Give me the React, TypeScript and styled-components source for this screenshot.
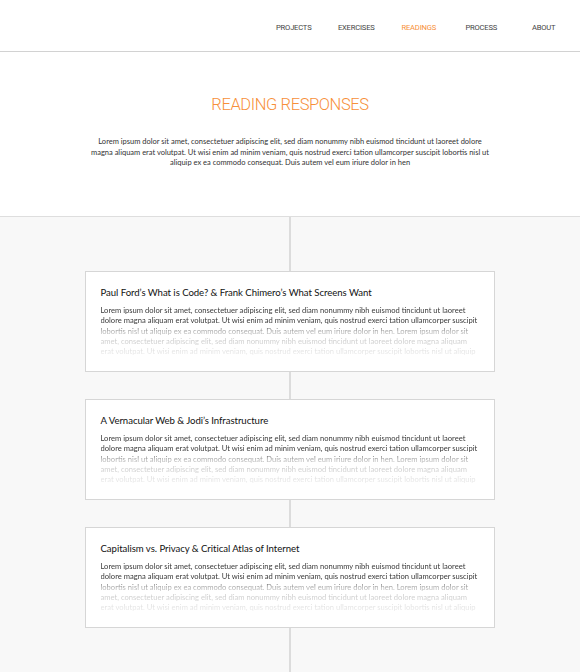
import React from "react";
import styled, { createGlobalStyle } from "styled-components";

const Global = createGlobalStyle`
  html, body { margin: 0; padding: 0; background: #ffffff; }
  body { font-family: "Lato", "Noto Sans", sans-serif; -webkit-font-smoothing: antialiased; }
  * { box-sizing: border-box; }
`;

const Page = styled.div`
  width: 580px;
  min-height: 672px;
  display: flex;
  flex-direction: column;
`;

const NavBar = styled.nav`
  height: 52px;
  border-bottom: 1px solid #d2d2d2;
  display: flex;
  justify-content: flex-end;
  align-items: center;
  padding-right: 5px;
  padding-top: 3px;
`;

const NavItem = styled.a<{ $active?: boolean }>`
  width: 62.5px;
  text-align: center;
  font-family: "Roboto", "Liberation Sans", sans-serif;
  font-size: 7.6px;
  letter-spacing: -0.2px;
  color: ${(p) => (p.$active ? "#f7903a" : "#444444")};
  text-decoration: none;
  text-transform: uppercase;
`;

const Intro = styled.header`
  height: 165px;
  border-bottom: 1px solid #dedede;
  display: flex;
  flex-direction: column;
  align-items: center;
  padding-top: 43px;
`;

const Title = styled.h1`
  margin: 0;
  font-family: "Roboto", "Liberation Sans", sans-serif;
  font-weight: 300;
  font-size: 16.5px;
  line-height: 20px;
  color: #f7903a;
  letter-spacing: -0.4px;
`;

const IntroText = styled.p`
  margin: 22px 0 0;
  width: 404px;
  text-align: center;
  font-size: 7.5px;
  line-height: 10.5px;
  color: #333333;
`;

const Timeline = styled.section`
  position: relative;
  flex: 1;
  background: #f8f8f8;
  display: flex;
  flex-direction: column;
  align-items: center;
  gap: 27px;
  padding: 54px 0 46px;
  &::before {
    content: "";
    position: absolute;
    top: 0;
    bottom: 0;
    left: 289px;
    width: 1.5px;
    background: #dcdcdc;
  }
`;

const Card = styled.article`
  position: relative;
  width: 410px;
  height: 101px;
  margin-left: -1px;
  background: #ffffff;
  border: 1px solid #d6d6d6;
  padding: 15px 16px 0 15px;
  overflow: hidden;
`;

const CardTitle = styled.h2`
  margin: 0;
  font-size: 9.6px;
  line-height: 12px;
  font-weight: 400;
  color: #111111;
  letter-spacing: -0.05px;
`;

const CardBody = styled.p`
  margin: 6px 0 0;
  font-size: 7.6px;
  line-height: 10.3px;
  color: #3a3a3a;
  -webkit-mask-image: linear-gradient(to bottom, #000 0px, #000 20px, rgba(0,0,0,0.35) 27px, rgba(0,0,0,0.08) 52px);
  mask-image: linear-gradient(to bottom, #000 0px, #000 20px, rgba(0,0,0,0.35) 27px, rgba(0,0,0,0.08) 52px);
`;

const lorem =
  "Lorem ipsum dolor sit amet, consectetuer adipiscing elit, sed diam nonummy nibh euismod tincidunt ut laoreet dolore magna aliquam erat volutpat. Ut wisi enim ad minim veniam, quis nostrud exerci tation ullamcorper suscipit lobortis nisl ut aliquip ex ea commodo consequat. Duis autem vel eum iriure dolor in hen. Lorem ipsum dolor sit amet, consectetuer adipiscing elit, sed diam nonummy nibh euismod tincidunt ut laoreet dolore magna aliquam erat volutpat. Ut wisi enim ad minim veniam, quis nostrud exerci tation ullamcorper suscipit lobortis nisl ut aliquip";

const readings = [
  "Paul Ford\u2019s What is Code? & Frank Chimero\u2019s What Screens Want",
  "A Vernacular Web & Jodi\u2019s Infrastructure",
  "Capitalism vs. Privacy & Critical Atlas of Internet",
];

const navItems = ["Projects", "Exercises", "Readings", "Process", "About"];

export default function App() {
  return (
    <Page>
      <Global />
      <NavBar>
        {navItems.map((n) => (
          <NavItem key={n} href="#" $active={n === "Readings"}>
            {n}
          </NavItem>
        ))}
      </NavBar>
      <Intro>
        <Title>READING RESPONSES</Title>
        <IntroText>
          Lorem ipsum dolor sit amet, consectetuer adipiscing elit, sed diam nonummy nibh euismod tincidunt ut laoreet dolore
          magna aliquam erat volutpat. Ut wisi enim ad minim veniam, quis nostrud exerci tation ullamcorper suscipit lobortis nisl ut
          aliquip ex ea commodo consequat. Duis autem vel eum iriure dolor in hen
        </IntroText>
      </Intro>
      <Timeline>
        {readings.map((r) => (
          <Card key={r}>
            <CardTitle>{r}</CardTitle>
            <CardBody>{lorem}</CardBody>
          </Card>
        ))}
      </Timeline>
    </Page>
  );
}
